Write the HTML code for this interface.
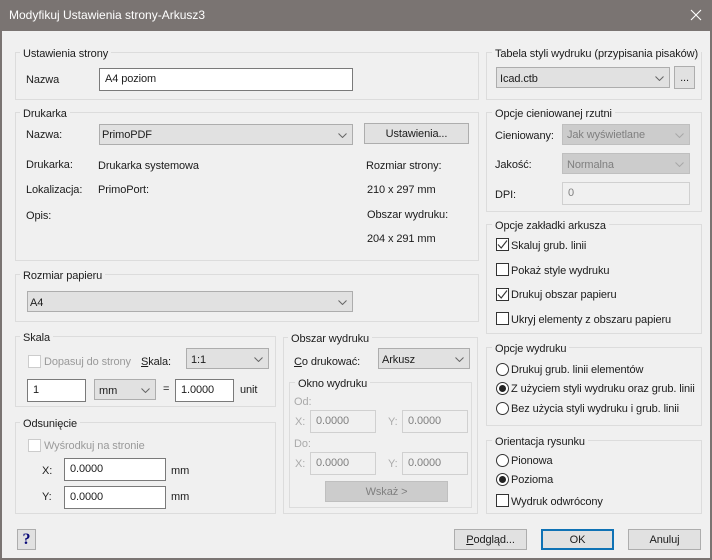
<!DOCTYPE html>
<html><head><meta charset="utf-8">
<style>
html,body{margin:0;padding:0}
body{width:712px;height:560px;position:relative;overflow:hidden;background:#f0f0f0;font:11px/14px "Liberation Sans",sans-serif;letter-spacing:-.1px;color:#1c1c1c}
div,span.t{position:absolute;box-sizing:border-box;white-space:nowrap}
.tb{left:0;top:0;width:712px;height:31px;background:#7a7472;color:#fff;font-size:12px;letter-spacing:0;line-height:31px;padding-left:9px}
.b{left:0;top:31px;width:712px;height:529px;border:2px solid #7a7472;border-top:0}
.g{border:1px solid #dcdcdc}
.l{background:#f0f0f0;padding:0 3px;height:14px;line-height:16px}
.t{line-height:14px;margin-top:1px}
.dis{color:#9a9a9a}
.in{background:#fff;border:1px solid #7a7a7a;padding-left:5px;line-height:20px}
.ind{background:#f0f0f0;border:1px solid #d0d0d0;color:#808080;padding-left:5px;line-height:20px}
.c{background:#e1e1e1;border:1px solid #adadad;padding-left:4px;line-height:22px}
.cd{background:#cccccc;border:1px solid #bfbfbf;color:#7f7f7f;padding-left:4px;line-height:21px}
.c svg,.cd svg{position:absolute;right:5px;top:8px}
.btn{background:#e1e1e1;border:1px solid #adadad;text-align:center;line-height:21px}
.cb{width:13px;height:13px;background:#fff;border:1px solid #333}
.cb.d{border-color:#ccc}
.cb svg{position:absolute;left:0;top:0}
.r{width:13px;height:13px;border:1px solid #333;border-radius:50%;background:#fff}
.r.on:after{content:"";position:absolute;left:2px;top:2px;width:7px;height:7px;border-radius:50%;background:#222}
u{text-decoration:underline}
</style></head><body>
<div class="tb">Modyfikuj Ustawienia strony-Arkusz3</div>
<svg style="position:absolute;left:690px;top:9px" width="12" height="12"><path d="M1 1L11 11M11 1L1 11" stroke="#fff" stroke-width="1.1" fill="none"/></svg>
<div class="b"></div>

<div class="g" style="left:15px;top:52px;width:464px;height:48px"></div>
<div class="l" style="left:20px;top:46px">Ustawienia strony</div>
<span class="t" style="left:26px;top:72px">Nazwa</span>
<div class="in" style="left:99px;top:68px;width:254px;height:23px">A4 poziom</div>

<div class="g" style="left:15px;top:112px;width:464px;height:149px"></div>
<div class="l" style="left:20px;top:106px">Drukarka</div>
<span class="t" style="left:26px;top:127px">Nazwa:</span>
<div class="c" style="left:99px;top:124px;width:254px;height:21px;padding-left:2px;line-height:21px">PrimoPDF<svg width="9" height="5"><path d="M.5 .5L4.500 4.500 8.500 .5" stroke="#666" fill="none"/></svg></div>
<div class="btn" style="left:364px;top:123px;width:105px;height:21px">Ustawienia...</div>
<span class="t" style="left:26px;top:157px">Drukarka:</span>
<span class="t" style="left:98px;top:158px">Drukarka systemowa</span>
<span class="t" style="left:26px;top:182px">Lokalizacja:</span>
<span class="t" style="left:98px;top:182px">PrimoPort:</span>
<span class="t" style="left:26px;top:208px">Opis:</span>
<span class="t" style="left:366px;top:158px">Rozmiar strony:</span>
<span class="t" style="left:367px;top:182px">210 x 297 mm</span>
<span class="t" style="left:367px;top:207px">Obszar wydruku:</span>
<span class="t" style="left:367px;top:231px">204 x 291 mm</span>

<div class="g" style="left:15px;top:274px;width:464px;height:48px"></div>
<div class="l" style="left:20px;top:268px">Rozmiar papieru</div>
<div class="c" style="left:27px;top:291px;width:326px;height:21px;padding-left:2px">A4<svg width="9" height="5"><path d="M.5 .5L4.500 4.500 8.500 .5" stroke="#666" fill="none"/></svg></div>

<div class="g" style="left:15px;top:336px;width:261px;height:71px"></div>
<div class="l" style="left:20px;top:330px">Skala</div>
<div class="cb d" style="left:28px;top:355px"></div>
<span class="t dis" style="left:44px;top:354px">Dopasuj do strony</span>
<span class="t" style="left:141px;top:354px"><u>S</u>kala:</span>
<div class="c" style="left:186px;top:348px;width:83px;height:21px">1:1<svg width="9" height="5"><path d="M.5 .5L4.500 4.500 8.500 .5" stroke="#666" fill="none"/></svg></div>
<div class="in" style="left:27px;top:379px;width:59px;height:23px">1</div>
<div class="c" style="left:94px;top:379px;width:62px;height:21px">mm<svg width="9" height="5"><path d="M.5 .5L4.500 4.500 8.500 .5" stroke="#666" fill="none"/></svg></div>
<span class="t" style="left:163px;top:381px">=</span>
<div class="in" style="left:175px;top:379px;width:59px;height:23px">1.0000</div>
<span class="t" style="left:240px;top:382px">unit</span>

<div class="g" style="left:15px;top:422px;width:261px;height:92px"></div>
<div class="l" style="left:20px;top:416px">Odsunięcie</div>
<div class="cb d" style="left:28px;top:439px"></div>
<span class="t dis" style="left:44px;top:438px">Wyśrodkuj na stronie</span>
<span class="t" style="left:42px;top:463px">X:</span>
<div class="in" style="left:64px;top:458px;width:102px;height:23px">0.0000</div>
<span class="t" style="left:171px;top:463px">mm</span>
<span class="t" style="left:42px;top:489px">Y:</span>
<div class="in" style="left:64px;top:486px;width:102px;height:23px">0.0000</div>
<span class="t" style="left:171px;top:489px">mm</span>

<div class="g" style="left:283px;top:337px;width:195px;height:177px"></div>
<div class="l" style="left:288px;top:331px">Obszar wydruku</div>
<span class="t" style="left:294px;top:354px"><u>C</u>o drukować:</span>
<div class="c" style="left:378px;top:348px;width:92px;height:21px;padding-left:3px">Arkusz<svg width="9" height="5"><path d="M.5 .5L4.500 4.500 8.500 .5" stroke="#666" fill="none"/></svg></div>
<div class="g" style="left:289px;top:382px;width:183px;height:126px"></div>
<div class="l" style="left:295px;top:376px">Okno wydruku</div>
<span class="t dis" style="left:294px;top:394px;color:#aaa">Od:</span>
<span class="t dis" style="left:295px;top:414px;color:#aaa">X:</span>
<div class="ind" style="left:310px;top:410px;width:66px;height:23px">0.0000</div>
<span class="t dis" style="left:388px;top:414px;color:#aaa">Y:</span>
<div class="ind" style="left:402px;top:410px;width:66px;height:23px">0.0000</div>
<span class="t dis" style="left:294px;top:436px;color:#aaa">Do:</span>
<span class="t dis" style="left:295px;top:456px;color:#aaa">X:</span>
<div class="ind" style="left:310px;top:452px;width:66px;height:23px">0.0000</div>
<span class="t dis" style="left:388px;top:456px;color:#aaa">Y:</span>
<div class="ind" style="left:402px;top:452px;width:66px;height:23px">0.0000</div>
<div class="btn" style="left:325px;top:481px;width:123px;height:21px;background:#ccc;border-color:#bfbfbf;color:#7f7f7f">Wskaż &gt;</div>

<div class="g" style="left:486px;top:52px;width:216px;height:48px"></div>
<div class="l" style="left:492px;top:46px">Tabela styli wydruku (przypisania pisaków)</div>
<div class="c" style="left:496px;top:67px;width:174px;height:21px;padding-left:3px">Icad.ctb<svg width="9" height="5"><path d="M.5 .5L4.500 4.500 8.500 .5" stroke="#666" fill="none"/></svg></div>
<div class="btn" style="left:674px;top:66px;width:21px;height:23px;line-height:23px">...</div>

<div class="g" style="left:486px;top:112px;width:216px;height:100px"></div>
<div class="l" style="left:492px;top:106px">Opcje cieniowanej rzutni</div>
<span class="t" style="left:495px;top:128px">Cieniowany:</span>
<div class="cd" style="left:562px;top:124px;width:128px;height:21px">Jak wyświetlane<svg width="9" height="5"><path d="M.5 .5L4.500 4.500 8.500 .5" stroke="#a8a8a8" fill="none"/></svg></div>
<span class="t" style="left:495px;top:157px">Jakość:</span>
<div class="cd" style="left:562px;top:153px;width:128px;height:21px;line-height:22px">Normalna<svg width="9" height="5"><path d="M.5 .5L4.500 4.500 8.500 .5" stroke="#a8a8a8" fill="none"/></svg></div>
<span class="t" style="left:495px;top:187px">DPI:</span>
<div class="ind" style="left:562px;top:182px;width:128px;height:23px">0</div>

<div class="g" style="left:486px;top:224px;width:216px;height:110px"></div>
<div class="l" style="left:492px;top:218px">Opcje zakładki arkusza</div>
<div class="cb" style="left:496px;top:238px"><svg width="11" height="11"><path d="M1 5.500L4.200 9 10 1.500" stroke="#333" stroke-width="1.100" fill="none"/></svg></div>
<span class="t" style="left:511px;top:238px">Skaluj grub. linii</span>
<div class="cb" style="left:496px;top:263px"></div>
<span class="t" style="left:511px;top:263px">Pokaż style wydruku</span>
<div class="cb" style="left:496px;top:288px"><svg width="11" height="11"><path d="M1 5.500L4.200 9 10 1.500" stroke="#333" stroke-width="1.100" fill="none"/></svg></div>
<span class="t" style="left:511px;top:287px">Drukuj obszar papieru</span>
<div class="cb" style="left:496px;top:312px"></div>
<span class="t" style="left:511px;top:312px">Ukryj elementy z obszaru papieru</span>

<div class="g" style="left:486px;top:347px;width:216px;height:79px"></div>
<div class="l" style="left:492px;top:341px">Opcje wydruku</div>
<div class="r" style="left:496px;top:363px"></div>
<span class="t" style="left:511px;top:362px">Drukuj grub. linii elementów</span>
<div class="r on" style="left:496px;top:382px"></div>
<span class="t" style="left:511px;top:381px">Z użyciem styli wydruku oraz grub. linii</span>
<div class="r" style="left:496px;top:402px"></div>
<span class="t" style="left:511px;top:401px">Bez użycia styli wydruku i grub. linii</span>

<div class="g" style="left:486px;top:440px;width:216px;height:74px"></div>
<div class="l" style="left:492px;top:434px">Orientacja rysunku</div>
<div class="r" style="left:496px;top:454px"></div>
<span class="t" style="left:511px;top:453px">Pionowa</span>
<div class="r on" style="left:496px;top:473px"></div>
<span class="t" style="left:511px;top:472px">Pozioma</span>
<div class="cb" style="left:496px;top:494px"></div>
<span class="t" style="left:511px;top:494px">Wydruk odwrócony</span>

<div class="btn" style="left:17px;top:529px;width:19px;height:21px;font:bold 16px/19px 'Liberation Serif',serif;color:#0a0a78">?</div>
<div class="btn" style="left:454px;top:529px;width:73px;height:21px"><u>P</u>odgląd...</div>
<div class="btn" style="left:541px;top:529px;width:73px;height:21px;border:2px solid #0f72b5;line-height:19px">OK</div>
<div class="btn" style="left:628px;top:529px;width:73px;height:21px">Anuluj</div>
</body></html>
